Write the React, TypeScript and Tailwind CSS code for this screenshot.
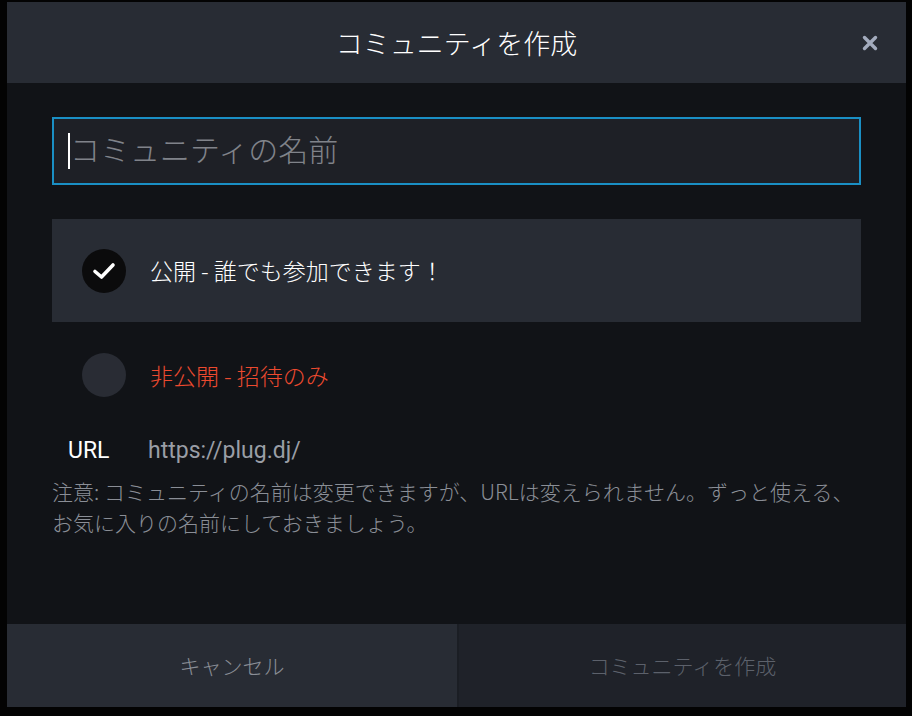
import React, { useState } from 'react';

const jp = { fontFamily: '"Noto Sans CJK JP", "Noto Sans", sans-serif' };
const latin = { fontFamily: 'Roboto, "Noto Sans CJK JP", sans-serif' };

function Radio({ checked }: { checked: boolean }) {
  return (
    <div
      className={`flex h-[44px] w-[44px] shrink-0 items-center justify-center rounded-full ${
        checked ? 'bg-[#0b0b0c]' : 'bg-[#292c34]'
      }`}
    >
      {checked && (
        <svg width="24" height="20" viewBox="0 0 24 20">
          <path
            d="M3 10.5 L9.5 16 L21 4"
            fill="none"
            stroke="#ffffff"
            strokeWidth="3.6"
            strokeLinecap="round"
            strokeLinejoin="round"
          />
        </svg>
      )}
    </div>
  );
}

function App() {
  const [isPublic, setIsPublic] = useState(true);

  return (
    <div className="h-[716px] w-[912px] overflow-hidden bg-[#030303] pl-[7px] pt-[2px]" style={jp}>
      <div className="flex h-[705px] w-[899px] flex-col bg-[#111317]">
        {/* header */}
        <div className="relative flex h-[81px] shrink-0 items-center justify-center bg-[#282c34]">
          <h1 className="text-[27px] font-light leading-none text-white">コミュニティを作成</h1>
          <button className="absolute right-[28px] top-[33px] text-[#a3abbd]">
            <svg width="16" height="16" viewBox="0 0 16 16">
              <path d="M2.5 2.5 L13.5 13.5 M13.5 2.5 L2.5 13.5" stroke="currentColor" strokeWidth="3.4" strokeLinecap="round" />
            </svg>
          </button>
        </div>

        {/* body */}
        <div className="flex flex-1 flex-col px-[45px] pt-[34px]">
          <div className="flex h-[68px] items-center border-2 border-[#1a8fc4] bg-[#1e2026] pl-[14px]">
            <span className="h-[36px] w-[2px] bg-white" />
            <input
              className="flex-1 bg-transparent pb-[5px] text-[30px] font-light text-white outline-none placeholder:text-[#80838a]"
              style={jp}
              placeholder="コミュニティの名前"
            />
          </div>

          <div
            className={`mt-[34px] flex h-[103px] cursor-pointer items-center gap-[24px] pl-[30px] ${
              isPublic ? 'bg-[#282c34]' : ''
            }`}
            onClick={() => setIsPublic(true)}
          >
            <Radio checked={isPublic} />
            <span className="text-[23px] font-light text-white">公開 - 誰でも参加できます！</span>
          </div>

          <div
            className={`flex h-[108px] cursor-pointer items-center gap-[24px] pb-[2px] pl-[30px] ${
              !isPublic ? 'bg-[#282c34]' : ''
            }`}
            onClick={() => setIsPublic(false)}
          >
            <Radio checked={!isPublic} />
            <span className="text-[23px] font-light text-[#ec4a2f]">非公開 - 招待のみ</span>
          </div>

          <div className="mt-[6px] flex items-center pl-[16px] text-[23px] leading-[30px]" style={latin}>
            <span className="w-[80px] text-white">URL</span>
            <span className="text-[#9a9ea6]">https://plug.dj/</span>
          </div>

          <p className="mt-[10px] text-[21px] font-light leading-[31px] text-[#8a8e96]">
            注意: コミュニティの名前は変更できますが、URLは変えられません。ずっと使える、
            <br />
            お気に入りの名前にしておきましょう。
          </p>
        </div>

        {/* footer */}
        <div className="flex h-[83px] shrink-0">
          <button className="flex w-[450px] items-center justify-center bg-[#282c34] text-[21px] font-light text-[#8a8e96]" style={jp}>
            キャンセル
          </button>
          <button className="flex flex-1 items-center justify-center border-l-2 border-[#1b1e24] bg-[#1f2229] text-[21px] font-light text-[#5c616b]" style={jp}>
            コミュニティを作成
          </button>
        </div>
      </div>
    </div>
  );
}

export default App;
